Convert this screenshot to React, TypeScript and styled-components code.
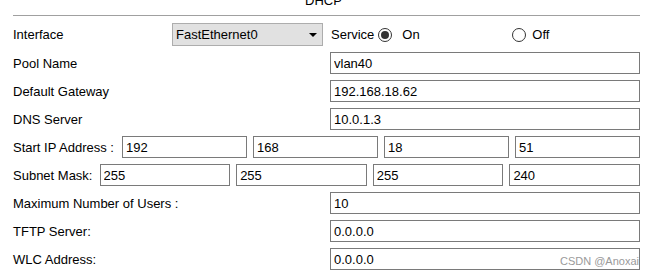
import React from 'react'
import styled, { createGlobalStyle } from 'styled-components'

const GlobalStyle = createGlobalStyle`
  html, body {
    margin: 0;
    padding: 0;
    background: #ffffff;
    overflow: hidden;
  }
  body {
    font-family: 'Liberation Sans', Arial, sans-serif;
    font-size: 13px;
    color: #000000;
  }
`

const Page = styled('div')`
  width: 653px;
  height: 277px;
  box-sizing: border-box;
  padding: 0 13px;
`

// the title sits mostly above the visible area, only its bottom shows
const Header = styled('div')`
  display: flex;
  justify-content: center;
  height: 15px;
  border-bottom: 1px solid #a0a0a0;
`

const HeaderTitle = styled('div')`
  margin-top: -7px;
  margin-right: 6px;
  line-height: 15px;
`

const Form = styled('div')`
  display: flex;
  flex-direction: column;
  gap: 6px;
  padding-top: 7px;
`

const InterfaceRow = styled('div')`
  display: flex;
  align-items: center;
  height: 23px;
`

const InterfaceLabel = styled('div')`
  width: 159px;
`

const Select = styled('div')`
  width: 151px;
  height: 23px;
  box-sizing: border-box;
  display: flex;
  align-items: center;
  justify-content: space-between;
  padding: 0 5px 0 3px;
  background: #e1e1e1;
  border: 1px solid #adadad;
`

const Caret = styled('span')`
  width: 0;
  height: 0;
  border-left: 4px solid transparent;
  border-right: 4px solid transparent;
  border-top: 4px solid #000000;
  margin-top: 1px;
`

const ServiceLabel = styled('span')`
  margin-left: 8px;
  margin-right: 4px;
`

interface OptionProps {
  width?: number
  gap: number
}

const RadioOption = styled('label')<OptionProps>`
  display: flex;
  align-items: center;
  gap: ${({ gap }) => gap}px;
  width: ${({ width }) => (width ? `${width}px` : 'auto')};
`

interface RadioProps {
  checked: boolean
}

const RadioCircle = styled('span')<RadioProps>`
  width: 14px;
  height: 14px;
  box-sizing: border-box;
  border-radius: 50%;
  border: 1px solid #333333;
  background: #ffffff;
  display: flex;
  align-items: center;
  justify-content: center;

  &::after {
    content: '';
    width: 8px;
    height: 8px;
    border-radius: 50%;
    background: #333333;
    display: ${({ checked }) => (checked ? 'block' : 'none')};
  }
`

const FieldRow = styled('div')`
  display: grid;
  grid-template-columns: 317px 1fr;
  align-items: center;
  position: relative;
`

const SplitRow = styled('div')`
  display: flex;
  align-items: center;
  gap: 6px;
`

interface LabelProps {
  trail?: number
}

const Label = styled('div')<LabelProps>`
  white-space: nowrap;
  margin-right: ${({ trail }) => trail ?? 0}px;
`

const TextBox = styled('input')`
  height: 22px;
  min-width: 0;
  box-sizing: border-box;
  margin: 0;
  padding: 0 3px;
  border: 1px solid #7a7a7a;
  border-radius: 0;
  background: #ffffff;
  font-family: 'Liberation Sans', Arial, sans-serif;
  font-size: 13px;
  color: #000000;
  outline: none;
`

const SplitBox = styled(TextBox)`
  flex: 1;
`

const Watermark = styled('span')`
  position: absolute;
  right: 1px;
  bottom: 3px;
  font-size: 11px;
  color: #9a9a9a;
  pointer-events: none;
`

const fields: [string, string][] = [
  ['Pool Name', 'vlan40'],
  ['Default Gateway', '192.168.18.62'],
  ['DNS Server', '10.0.1.3'],
]

const lowerFields: [string, string][] = [
  ['Maximum Number of Users :', '10'],
  ['TFTP Server:', '0.0.0.0'],
]

export default function App() {
  return (
    <>
      <GlobalStyle />
      <Page>
        <Header>
          <HeaderTitle>DHCP</HeaderTitle>
        </Header>
        <Form>
          <InterfaceRow>
            <InterfaceLabel>Interface</InterfaceLabel>
            <Select>
              <span>FastEthernet0</span>
              <Caret />
            </Select>
            <ServiceLabel>Service</ServiceLabel>
            <RadioOption width={134} gap={10}>
              <RadioCircle checked />
              On
            </RadioOption>
            <RadioOption gap={6}>
              <RadioCircle checked={false} />
              Off
            </RadioOption>
          </InterfaceRow>

          {fields.map(([label, value]) => (
            <FieldRow key={label}>
              <Label>{label}</Label>
              <TextBox defaultValue={value} />
            </FieldRow>
          ))}

          <SplitRow>
            <Label trail={2}>Start IP Address :</Label>
            {['192', '168', '18', '51'].map((v, i) => (
              <SplitBox key={i} defaultValue={v} />
            ))}
          </SplitRow>

          <SplitRow>
            <Label trail={1}>Subnet Mask:</Label>
            {['255', '255', '255', '240'].map((v, i) => (
              <SplitBox key={i} defaultValue={v} />
            ))}
          </SplitRow>

          {lowerFields.map(([label, value]) => (
            <FieldRow key={label}>
              <Label>{label}</Label>
              <TextBox defaultValue={value} />
            </FieldRow>
          ))}

          <FieldRow>
            <Label>WLC Address:</Label>
            <TextBox defaultValue='0.0.0.0' />
            <Watermark>CSDN @Anoxai</Watermark>
          </FieldRow>
        </Form>
      </Page>
    </>
  )
}
